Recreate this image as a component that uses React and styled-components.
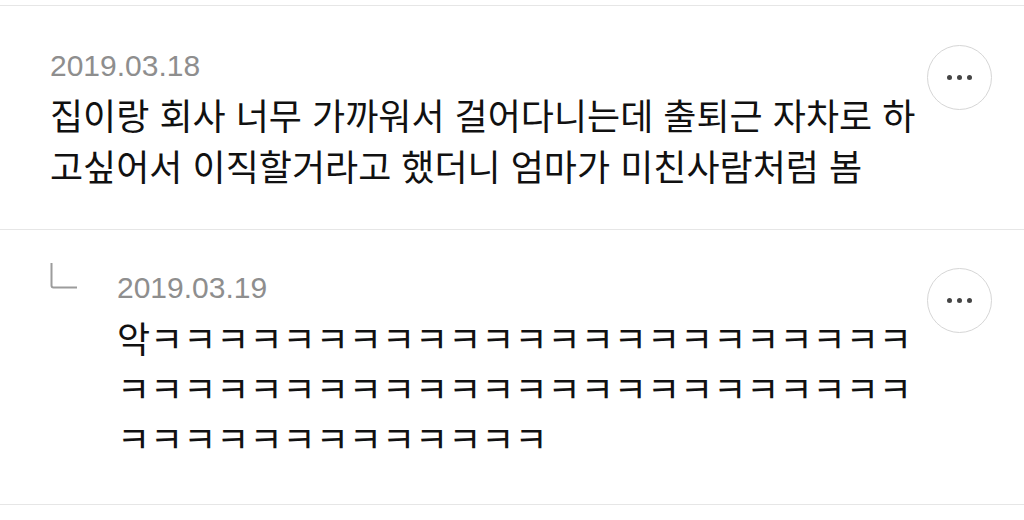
import React from 'react';
import styled, { createGlobalStyle } from 'styled-components';

const Global = createGlobalStyle`
  html, body { margin: 0; padding: 0; background: #fff; }
  body { font-family: "Noto Sans CJK KR", "Noto Sans", sans-serif; color: #111; }
`;

const List = styled.ul`
  list-style: none;
  margin: 5px 0 0;
  padding: 0;
  border-top: 1px solid #e6e6e6;
`;

const Item = styled.li`
  display: flex;
  align-items: flex-start;
  padding: ${(p) => (p.$reply ? '38px 32px 42px 50px' : '39px 32px 38px 50px')};
  border-bottom: 1px solid #e6e6e6;
`;

const ReplyMark = styled.div`
  flex: none;
  width: 67px;
  margin-top: -6px;
  svg { display: block; }
`;

const Content = styled.div`
  flex: 1;
  min-width: 0;
  margin-right: 6px;
  padding-top: ${(p) => (p.$reply ? '3px' : '4px')};
`;

const DateText = styled.div`
  font-family: "Liberation Sans", Arial, sans-serif;
  font-size: 30px;
  line-height: 34px;
  color: #8e8e8e;
`;

const Body = styled.p`
  margin: ${(p) => (p.$reply ? '7px' : '6px')} 0 0;
  font-size: 36px;
  line-height: ${(p) => (p.$reply ? '50px' : '51px')};
  word-spacing: 2px;
  color: #111;
`;

const MoreButton = styled.button`
  flex: none;
  width: 65px;
  height: 65px;
  padding: 0;
  border: 1px solid #d6d6d6;
  border-radius: 50%;
  background: #fff;
  display: flex;
  align-items: center;
  justify-content: center;
  gap: 5px;
  cursor: pointer;
`;

const Dot = styled.span`
  width: 5px;
  height: 5px;
  border-radius: 50%;
  background: #454545;
`;

function More() {
  return (
    <MoreButton aria-label="더보기">
      <Dot />
      <Dot />
      <Dot />
    </MoreButton>
  );
}

const comments = [
  {
    date: '2019.03.18',
    text: '집이랑 회사 너무 가까워서 걸어다니는데 출퇴근 자차로 하고싶어서 이직할거라고 했더니 엄마가 미친사람처럼 봄',
  },
  {
    date: '2019.03.19',
    reply: true,
    text: '악' + 'ㅋ'.repeat(60),
  },
];

export default function App() {
  return (
    <>
      <Global />
      <List>
        {comments.map((c, i) => (
          <Item key={i} $reply={c.reply}>
            {c.reply && (
              <ReplyMark>
                <svg width="28" height="27" viewBox="0 0 28 27">
                  <path d="M1.5 1 V23.5 Q1.5 25.5 3.5 25.5 H27" fill="none" stroke="#9c9c9c" strokeWidth="2" />
                </svg>
              </ReplyMark>
            )}
            <Content $reply={c.reply}>
              <DateText>{c.date}</DateText>
              <Body $reply={c.reply}>{c.text}</Body>
            </Content>
            <More />
          </Item>
        ))}
      </List>
    </>
  );
}
